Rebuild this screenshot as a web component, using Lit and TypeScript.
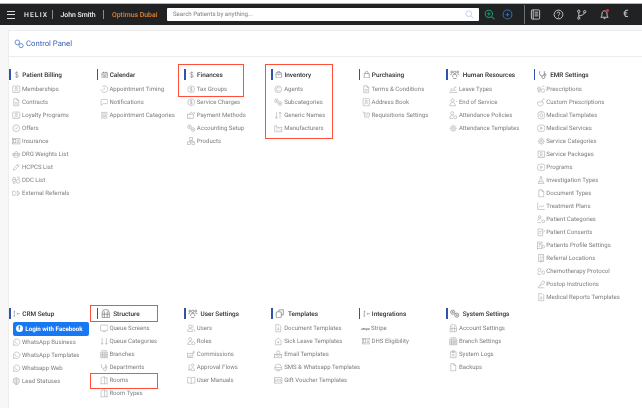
import { LitElement, html, css, svg } from "lit";
import { customElement } from "lit/decorators.js";

const I: Record<string, any> = {
  dollar: svg`<path d="M8.5 3.5C8 2.5 7 2 6 2 4.6 2 3.5 2.8 3.5 4S4.6 5.6 6 6s2.5 1 2.5 2.2S7.4 10 6 10c-1 0-2-.5-2.5-1.5M6 .8v10.4"/>`,
  card: svg`<rect x="1" y="1.5" width="10" height="9" rx="1"/><circle cx="6" cy="4.6" r="1.5"/><path d="M3.4 9.5C3.7 7.8 4.7 7.2 6 7.2s2.3.6 2.6 2.3"/>`,
  doc: svg`<path d="M2.5 1h4.5L9.5 3.5V11h-7zM7 1v2.5h2.5M4 6.5h4M4 8.5h4"/>`,
  offer: svg`<circle cx="6" cy="6" r="4.8"/><path d="M4.2 6.2l1.3 1.3 2.4-2.8"/>`,
  ins: svg`<rect x=".8" y="2.2" width="10.4" height="7.6"/><rect x="2.2" y="3.8" width="3.2" height="4.4"/><path d="M6.8 4.2h3M6.8 6h3M6.8 7.8h3"/>`,
  drg: svg`<path d="M3 5L6 1.5 9 5M1 5h10v2.5H1zM2 7.5c0 2 1.6 3 4 3s4-1 4-3"/><circle cx="4" cy="6.2" r=".5"/><circle cx="8" cy="6.2" r=".5"/>`,
  pen: svg`<path d="M2 10l.6-2.6L8.2 1.8l2 2L4.6 9.4zM7.2 2.8l2 2"/>`,
  ddc: svg`<rect x="1" y="2" width="4" height="6" rx="1.6"/><circle cx="8.5" cy="7.5" r="2.6"/><path d="M1 5h4M2 8.5V11M4 8.5V11M7 1.5h3v3"/>`,
  ext: svg`<path d="M1 3h3l2 3-2 3H1zM7 3h1.5L11 6 8.5 9H7l2-3z"/>`,
  clock: svg`<path d="M3 2.2A4.8 4.8 0 1 1 1.3 6"/><path d="M6 3.5V6.2l-1.6 1"/>`,
  chat: svg`<path d="M3 2h6.5a1.5 1.5 0 0 1 1.5 1.500v3A1.500 1.500 0 0 1 9.500 8H4.500L1.500 10.500V3.500A1.500 1.500 0 0 1 3 2z"/>`,
  lines: svg`<path d="M1.500 2h9M1.500 4h9M1.500 6h9M1.500 8h9M1.500 10h9"/>`,
  cal: svg`<rect x="1.500" y="2.500" width="9" height="8.500" rx="1"/><path d="M1.500 5h9M4 1v2.500M8 1v2.500M3.500 7h5M3.500 9h5"/>`,
  coin: svg`<circle cx="6" cy="6" r="4.800"/><path d="M7.500 4.500C7.200 3.800 6.700 3.600 6 3.600c-.9 0-1.500.5-1.500 1.200S5.200 5.800 6 6s1.600.5 1.600 1.200S6.900 8.400 6 8.400c-.7 0-1.300-.3-1.600-.9M6 2.800v6.400"/>`,
  pay: svg`<rect x=".8" y="4.500" width="8" height="6"/><path d="M2.500 4.500l4-3 1.500 3M3 8.500h2M9 1.500l2 1-1 2"/>`,
  gears: svg`<circle cx="3.500" cy="4" r="2.600"/><circle cx="8.500" cy="7.800" r="2.600"/><circle cx="3.500" cy="4" r=".8"/><circle cx="8.500" cy="7.800" r=".8"/>`,
  boxes: svg`<rect x="4" y="1" width="4" height="3.500"/><rect x="1" y="7" width="4" height="3.800"/><rect x="7" y="7" width="4" height="3.800"/><path d="M6 4.500V6M3 7V6h6v1"/>`,
  inv: svg`<rect x="1.500" y="2.500" width="9" height="8.500" rx="1.500"/><path d="M3 2.500L4 1h4l1 1.500M1.500 5h9M6 5v2.500"/>`,
  agent: svg`<circle cx="6" cy="6" r="4.800"/><path d="M8 4.200A2.600 2.600 0 1 0 8 7.800"/>`,
  sort: svg`<path d="M3.500 1.500v9M1.800 8.500l1.700 2 1.700-2M8.500 10.500v-9M6.800 3.500l1.700-2 1.700 2"/>`,
  fact: svg`<path d="M1 11V2.500h3V6l3-1.800V6l4-1.800V11zM3 8.500h1.500M6 8.500h1.500M8.500 8.500H10"/>`,
  bag: svg`<path d="M2 4h8v7H2zM4 4V2.500a2 2 0 0 1 4 0V4"/>`,
  book: svg`<rect x="1.500" y="1" width="9" height="10" rx=".8"/><circle cx="6" cy="4.600" r="1.500"/><path d="M3.500 9c.3-1.600 1.300-2.200 2.500-2.200S8.200 7.400 8.500 9"/>`,
  cart: svg`<path d="M.8 1.500h2l1 7h6l1-5.500H3M4.500 10.500h.5M8.500 10.500h.5M5 5l1.200 1.500L8.500 4"/>`,
  hr: svg`<circle cx="6" cy="3" r="1.500"/><circle cx="2.300" cy="2.500" r="1.200"/><circle cx="9.700" cy="2.500" r="1.200"/><path d="M3.500 9V7a2 2 0 0 1 2.500-1.500A2 2 0 0 1 8.500 7v2M.8 6.500C1 5 1.500 4.800 2.500 4.800M11.200 6.500C11 5 10.500 4.800 9.500 4.800"/><path d="M4 10.800h4"/>`,
  leave: svg`<path d="M.5 10.500h11M1 8h4l4-4.500M2 5.500h3.500M6.500 7.500h4M7 3h3.500"/>`,
  user: svg`<circle cx="5" cy="3.500" r="2.300"/><path d="M1 11c0-3 1.800-4.500 4-4.500S9 8 9 11zM9.500 5h2"/>`,
  roles: svg`<circle cx="4.500" cy="3.200" r="2.200"/><path d="M1 10.500C1 8 2.500 6.500 4.500 6.500c.8 0 1.500.2 2 .6M1 10.500h5"/><circle cx="9" cy="8.800" r="2.200"/>`,
  sun: svg`<circle cx="6" cy="6" r="3.200"/><circle cx="6" cy="6" r="1.200"/><path d="M6 .8v1.800M6 9.400v1.800M.8 6h1.800M9.400 6h1.800M2.400 2.400l1.200 1.200M8.400 8.400l1.200 1.200M9.600 2.400L8.400 3.600M3.600 8.400L2.400 9.600"/>`,
  steth: svg`<path d="M2 1.500v3a3 3 0 0 0 6 0v-3M5 7.500V9a1.800 1.800 0 0 0 3.600 0V7"/><circle cx="9" cy="5.800" r="1.200"/>`,
  rx: svg`<rect x="1" y="3" width="4" height="5" rx="1.500"/><circle cx="8.500" cy="7.800" r="2.500"/><path d="M1 5.500h4M2 8v2.800M4 8v2.800M7 1.800h3.500"/>`,
  cup: svg`<path d="M1 5.500h7.500a3.800 3.800 0 0 1-3.800 5.500A3.800 3.800 0 0 1 1 5.500zM7 5.500V3l3-2 1 1.200"/>`,
  tmpl: svg`<rect x="1.500" y="1" width="9" height="10" rx="3"/><circle cx="6" cy="6" r="2.200"/><path d="M6 1v2"/>`,
  play: svg`<rect x="1" y="1.500" width="10" height="9" rx="3"/><path d="M5 4.200L8 6 5 7.800z"/>`,
  pkg: svg`<rect x="1.500" y="1.500" width="9" height="9"/><circle cx="6" cy="5" r="1.600"/><path d="M3.500 9.500c.4-1.200 1.400-1.800 2.500-1.800s2.100.6 2.500 1.800"/>`,
  flask: svg`<path d="M4.500 1h2v3.500L10 10.500H1.500l3-6zM3 8h5"/>`,
  page: svg`<path d="M2.500 1h4.500L9.500 3.500V11h-7zM7 1v2.500h2.500"/>`,
  chart: svg`<path d="M1 1v9.500h10M2.500 7.500l2.500-2 2 1.500 3-2.500"/>`,
  cats: svg`<circle cx="3.800" cy="2.800" r="1.800"/><path d="M.8 8.200c.4-2 1.500-2.800 3-2.800 1 0 1.700.3 2.200 1"/><circle cx="8.800" cy="8.800" r="2"/><path d="M.8 10.800h5"/>`,
  cons: svg`<path d="M1.500 1.500h6.500v9.500H1.500zM3 5h3.500M3 7.500h3M9.500 2.500l1.500 1.500-2.500 2.500"/>`,
  prof: svg`<rect x="1" y="1.500" width="6" height="9.500"/><circle cx="4" cy="4.500" r="1.200"/><path d="M2.500 8.500c.2-1.200.8-1.700 1.500-1.700"/><circle cx="9" cy="8" r="1.800"/>`,
  ref: svg`<rect x="2.500" y="1" width="7" height="10"/><path d="M4 3h1.500M6.500 3H8M4 5h1.500M6.500 5H8M4 7h1.500M6.500 7H8M5 11V9h2v2"/>`,
  chemo: svg`<circle cx="3.500" cy="4" r="2.300"/><circle cx="8.800" cy="7.800" r="2.200"/><path d="M1.500 7.500v3h4"/>`,
  quill: svg`<path d="M1.500 11L7.500 2c1.200-1 2.500-.8 3 .3.300 1-.200 2-1 3L4 8.500M1.500 11h9"/>`,
  rep: svg`<path d="M2.500 1h5L9.500 3V11h-7zM6 4.500v4M4.300 7L6 8.500 7.700 7"/>`,
  crm: svg`<path d="M2 1v10M2 2.500h1.500M2 9.500h1.500M6 4.500l2 1.500-2 1.500M8 6h3"/>`,
  chatw: svg`<path d="M2 10.500l.7-2.300A4.500 4.500 0 1 1 4.300 9.800z"/><path d="M4.500 4.500c0 2 1.300 3.200 3 3.200"/>`,
  lead: svg`<circle cx="6" cy="5.500" r="4.500"/><path d="M6 1v9M1.800 4h8.400M1.800 7h8.400M4 11h4.500"/>`,
  struct: svg`<path d="M1.500 11V5a4.500 4.500 0 0 1 9 0v6z"/><path d="M1.500 6.500h9M4.200 11V3M7.800 11V3"/>`,
  screen: svg`<rect x=".8" y="1.500" width="10.400" height="8" rx="1"/><path d="M4 11h4"/>`,
  updown: svg`<path d="M3 1.500v8.500M1.500 8.500L3 10.500l1.500-2M9 1.500v8.500M7.500 8.500L9 10.500l1.500-2"/>`,
  branch: svg`<path d="M1 3h10v8H1z"/><path d="M3.500 3v8M6 3v8M8.500 3v8M1 6h10M1 8.500h10M2 1h8"/>`,
  room: svg`<path d="M1.500 11V2.500L6.500 1v10M6.500 2.500h3.500V11M.5 11h10.500M5 6.500v.5"/>`,
  users: svg`<circle cx="4.500" cy="3.500" r="2.200"/><path d="M.8 10.500c0-2.800 1.600-4 3.700-4s3.700 1.200 3.700 4z"/><path d="M7.500 1.500a2.200 2.200 0 0 1 0 4M9.500 7c1 .6 1.700 1.800 1.700 3.500"/>`,
  comm: svg`<rect x=".8" y="4.500" width="7.500" height="6"/><path d="M3 10.500V7M5.500 10.500V6M9.500 1v4M8 3h3"/>`,
  flow: svg`<path d="M3 1.500v9M1.500 8.500L3 10.500l1.500-2"/><circle cx="8" cy="3" r="1.700"/><path d="M5.500 10.500c0-2.500 1-3.800 2.500-3.800s2.500 1.300 2.500 3.800z"/>`,
  manual: svg`<path d="M6 2.800C5 2 3 1.800 .8 2v8c2.200-.2 4.200 0 5.200.8 1-.8 3-1 5.200-.8V2C9 1.800 7 2 6 2.800zM6 2.800v8"/>`,
  tpl: svg`<path d="M4 3a3 3 0 0 1 3-2h3.500v6.500H8"/><rect x="1.500" y="3.500" width="6.500" height="7.500" rx="1.500"/>`,
  sick: svg`<path d="M2 4.800L6 1.500l4 3.300V11H2zM4.500 7.500h3M6 6v3"/>`,
  mail: svg`<circle cx="6" cy="3.600" r="2.400"/><rect x="1" y="6" width="10" height="5"/><path d="M1 6l5 3 5-3"/>`,
  sms: svg`<path d="M1.500 6a4.500 4.500 0 0 1 9 0v3.500H1.500zM1 6.500h10M3.500 11h5"/>`,
  gift: svg`<rect x=".8" y="2.500" width="10.400" height="7.500"/><circle cx="6" cy="6.200" r="1.600"/><path d="M2.500 4v4.500M9.500 4v4.500"/>`,
  log: svg`<path d="M2 2.500h8V11H2zM4.500 1h3v2.500h-3zM4 6.500h4M4 8.500h4"/>`,
};

type Item = [string, string];
type Group = { t: string; i: string; wide?: boolean; items: Item[] };

const top: Group[] = [
  { t: "Patient Billing", i: "dollar", items: [["Memberships","card"],["Contracts","doc"],["Loyalty Programs","card"],["Offers","offer"],["Insurance","ins"],["DRG Weights List","drg"],["HCPCS List","pen"],["DDC List","ddc"],["External Referrals","ext"]] },
  { t: "Calendar", i: "cal", items: [["Appointment Timing","clock"],["Notifications","chat"],["Appointment Categories","lines"]] },
  { t: "Finances", i: "dollar", items: [["Tax Groups","coin"],["Service Charges","coin"],["Payment Methods","pay"],["Accounting Setup","gears"],["Products","boxes"]] },
  { t: "Inventory", i: "inv", items: [["Agents","agent"],["Subcategories","gears"],["Generic Names","sort"],["Manufacturers","fact"]] },
  { t: "Purchasing", i: "bag", items: [["Terms & Conditions","doc"],["Address Book","book"],["Requisitions Settings","cart"]] },
  { t: "Human Resources", i: "hr", wide: true, items: [["Leave Types","leave"],["End of Service","user"],["Attendance Policies","roles"],["Attendance Templates","sun"]] },
  { t: "EMR Settings", i: "steth", wide: true, items: [["Prescriptions","rx"],["Custom Prescriptions","cup"],["Medical Templates","tmpl"],["Medical Services","play"],["Service Categories","sun"],["Service Packages","pkg"],["Programs","play"],["Investigation Types","flask"],["Document Types","page"],["Treatment Plans","chart"],["Patient Categories","cats"],["Patient Consents","cons"],["Patients Profile Settings","prof"],["Referral Locations","ref"],["Chemotherapy Protocol","chemo"],["Postop Instructions","quill"],["Medical Reports Templates","rep"]] },
];

const bottom: Group[] = [
  { t: "CRM Setup", i: "crm", items: [["fb",""],["WhatsApp Business","chatw"],["WhatsApp Templates","chatw"],["Whatsapp Web","chatw"],["Lead Statuses","lead"]] },
  { t: "Structure", i: "struct", wide: true, items: [["Queue Screens","screen"],["Queue Categories","updown"],["Branches","branch"],["Departments","steth"],["Rooms","room"],["Room Types","room"]] },
  { t: "User Settings", i: "hr", wide: true, items: [["Users","users"],["Roles","roles"],["Commissions","comm"],["Approval Flows","flow"],["User Manuals","manual"]] },
  { t: "Templates", i: "tpl", wide: true, items: [["Document Templates","rep"],["Sick Leave Templates","sick"],["Email Templates","mail"],["SMS & Whatsapp Templates","sms"],["Gift Voucher Templates","gift"]] },
  { t: "Integrations", i: "crm", items: [["stripe",""],["DHS Eligibility","ins"]] },
  { t: "System Settings", i: "gears", wide: true, items: [["Account Settings","struct"],["Branch Settings","branch"],["System Logs","log"],["Backups","page"]] },
];

const ic = (n: string, cls = "ic") => html`<svg class=${cls} viewBox="0 0 12 12">${I[n]}</svg>`;

@customElement("app-root")
export class AppRoot extends LitElement {
  static styles = css`
    :host { display: block; width: 642px; height: 408px; overflow: hidden; position: relative; background: #f7f7f7; font-family: Roboto, "Liberation Sans", sans-serif; text-rendering: geometricPrecision; filter: blur(0.35px); }
    .strip { height: 3px; background: #fff; border-bottom: 1px solid #b5b5b5; }
    .bar { height: 21px; background: #212224; display: flex; align-items: center; color: #f0f0f0; font-size: 6.900px; font-weight: 500; white-space: nowrap; }
    .burger { width: 8px; height: 6px; margin-left: 7px; border-top: 1px solid #ddd; border-bottom: 1px solid #ddd; position: relative; }
    .burger::after { content: ""; position: absolute; left: 0; right: 0; top: 2.500px; height: 1px; background: #ddd; }
    .brand { margin-left: 9px; width: 28px; letter-spacing: 1.100px; font-size: 6.800px; }
    .sep { width: 1px; height: 9px; background: #8c8c8c; }
    .name { margin-left: 7.500px; width: 42.500px; }
    .org { margin-left: 8px; width: 55px; color: #e2812f; }
    .search { width: 312px; height: 13.500px; background: #fff; border-radius: 1px; display: flex; align-items: center; justify-content: space-between; padding: 0 5px 0 6px; box-sizing: border-box; color: #7d7d7d; font-size: 6.100px; font-weight: 400; }
    .search svg { width: 9px; height: 9px; fill: none; stroke: #a9c6ea; stroke-width: 1; }
    .tool { width: 11px; height: 11px; fill: none; stroke-width: 1.100; }
    .green { stroke: #1f9a74; margin-left: 4.500px; }
    .blue { stroke: #2a6fb8; margin-left: 7px; }
    .vr { width: 1px; height: 19px; background: #6c6e70; margin-left: 11px; }
    .acts { display: flex; align-items: center; margin-left: 5.500px; gap: 12px; }
    .acts svg { width: 11px; height: 11px; fill: none; stroke: #cfd0d0; stroke-width: 1; }
    .bell { position: relative; display: flex; }
    .dot { position: absolute; right: 1px; top: 0; width: 3px; height: 3px; border-radius: 50%; background: #e6332a; }
    .euro { color: #ddd; font-size: 10px; font-weight: 400; margin-left: 1px; }
    .card { position: absolute; left: 8px; right: 0; top: 30px; bottom: 0; background: #fff; border-top: 1px solid #ededed; border-left: 1px solid #ededed; }
    .head { height: 25px; border-bottom: 1px solid #ececec; display: flex; align-items: center; gap: 2px; padding-left: 5px; font-size: 7.700px; color: #3c5fb3; }
    .head svg { width: 10px; height: 10px; fill: none; stroke: #5d86cf; stroke-width: 1.100; }
    .row { display: grid; grid-template-columns: repeat(7, 87.400px); margin-left: 0.300px; }
    .r1 { padding-top: 12px; height: 239px; }
    .sec { min-width: 0; }
    .title { display: flex; align-items: center; height: 11px; margin-bottom: 3px; font-size: 6.400px; font-weight: 500; color: #2e2e2e; white-space: nowrap; }
    .title i { width: 1.500px; height: 11px; background: #2f55a8; margin-right: 2.500px; }
    .title svg { width: 7.500px; height: 7.500px; margin-right: 1.500px; fill: none; stroke: #777; stroke-width: .9; flex: none; }
    .title.wide svg { width: 9.500px; height: 9.500px; margin-right: 3px; }
    .item { display: flex; align-items: center; height: 13px; padding-left: 3px; font-size: 6.050px; color: #7d7d7d; white-space: nowrap; }
    .ic { width: 8.500px; height: 8.500px; margin-right: 1.200px; fill: none; stroke: #a0a0a0; stroke-width: .75; flex: none; }
    .fb { display: flex; align-items: center; gap: 2.500px; width: 76px; height: 13.500px; margin-left: 4px; background: #1778f2; border-radius: 2px; color: #fff; font-size: 6.200px; font-weight: 700; box-sizing: border-box; padding-left: 2.500px; white-space: nowrap; }
    .fb b { width: 7px; height: 7px; border-radius: 50%; background: #fff; color: #1778f2; font-size: 6px; line-height: 8px; text-align: center; font-family: "Liberation Sans", sans-serif; overflow: hidden; }
    .stripe { width: 8.500px; margin-right: 1.200px; font-size: 3.200px; font-weight: 700; color: #666; overflow: hidden; margin-left: -.5px; }
    .mark { position: absolute; border: 1.500px solid #ff4f38; box-sizing: border-box; }
    .m1 { left: 169px; top: 33px; width: 66px; height: 33px; }
    .m2 { left: 256px; top: 33px; width: 68px; height: 75px; }
    .m3 { left: 81px; top: 274px; width: 68px; height: 17px; }
    .m4 { left: 81px; top: 342px; width: 68px; height: 16px; }
  `;

  private sec(g: Group) {
    return html`<div class="sec">
      <div class="title ${g.wide ? "wide" : ""}"><i></i>${ic(g.i, "")}<span>${g.t}</span></div>
      ${g.items.map(([t, n]) =>
        t === "fb"
          ? html`<div class="fb"><b>f</b><span>Login with Facebook</span></div>`
          : t === "stripe"
          ? html`<div class="item"><span class="stripe">stripe</span>Stripe</div>`
          : html`<div class="item">${ic(n)}<span>${t}</span></div>`
      )}
    </div>`;
  }

  render() {
    return html`
      <div class="strip"></div>
      <div class="bar">
        <div class="burger"></div>
        <span class="brand">HELIX</span><span class="sep"></span>
        <span class="name">John Smith</span><span class="sep"></span>
        <span class="org">Optimus Dubai</span>
        <div class="search"><span>Search Patients by anything...</span><svg viewBox="0 0 12 12"><circle cx="5" cy="5" r="3.800"/><path d="M8 8l3 3"/></svg></div>
        <svg class="tool green" viewBox="0 0 12 12"><circle cx="5.300" cy="5.300" r="4"/><path d="M8.300 8.300l3 3M3.500 5.300h3.600M5.300 3.500v3.600"/></svg>
        <svg class="tool blue" viewBox="0 0 12 12"><circle cx="6" cy="6" r="4.800"/><path d="M4 6.200h4M6 4v4"/></svg>
        <div class="vr"></div>
        <div class="acts">
          <svg viewBox="0 0 12 12"><rect x="1.500" y="1" width="9" height="10" rx="1"/><path d="M3.500 1v10M5 3.500h4M5 5.500h4M5 7.500h4"/></svg>
          <svg viewBox="0 0 12 12"><circle cx="6" cy="6" r="4.800"/><path d="M4.500 4.700C4.700 3.800 5.200 3.400 6 3.400c1 0 1.500.6 1.500 1.300 0 1.200-1.500 1.300-1.500 2.600M6 8.500v.8"/></svg>
          <svg viewBox="0 0 12 12"><circle cx="3" cy="2.500" r="1.300"/><circle cx="3" cy="10" r="1.200"/><circle cx="9.500" cy="3" r="1.300"/><path d="M3 3.800v5M3.300 7.500c3-.3 5.500-1.500 6-3.300"/></svg>
          <span class="bell"><svg viewBox="0 0 12 12"><path d="M2 9c1-1 1.200-2 1.200-3.500C3.200 3.500 4.400 2 6 2s2.800 1.500 2.800 3.500C8.800 7 9 8 10 9zM5 10.500h2"/></svg><span class="dot"></span></span>
          <span class="euro">€</span>
        </div>
      </div>
      <div class="card">
        <div class="head"><svg viewBox="0 0 12 12"><circle cx="4" cy="4" r="2.800"/><circle cx="8.500" cy="8" r="2.500"/></svg><span>Control Panel</span></div>
        <div class="row r1">${top.map((g) => this.sec(g))}</div>
        <div class="row">${bottom.map((g) => this.sec(g))}</div>
        <div class="mark m1"></div><div class="mark m2"></div><div class="mark m3"></div><div class="mark m4"></div>
      </div>
    `;
  }
}
